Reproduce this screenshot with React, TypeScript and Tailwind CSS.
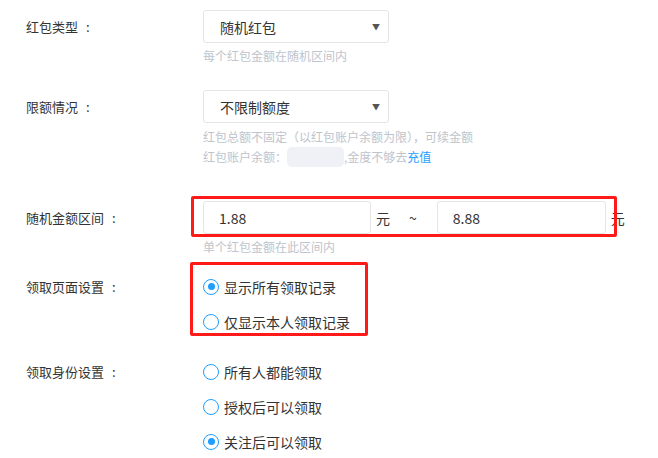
import React from "react";

const font = { fontFamily: '"Noto Sans CJK SC", "Liberation Sans", sans-serif' };

function Radio({ checked, label }: { checked?: boolean; label: string }) {
  return (
    <div className="flex h-[35px] items-center">
      <span className="flex h-[16px] w-[16px] items-center justify-center rounded-full border-[1.5px] border-[#1e9fff] bg-white">
        {checked && <span className="h-[7px] w-[7px] rounded-full bg-[#1e9fff]" />}
      </span>
      <span className="ml-[5px] text-[14px] leading-[20px] text-[#333]">{label}</span>
    </div>
  );
}

function Select({ value }: { value: string }) {
  return (
    <div className="flex h-[33px] w-[186px] items-center justify-between rounded-[3px] border border-[#e6e6e6] bg-white pl-[16px] pr-[8px]">
      <span className="text-[14px] leading-[20px] text-[#333]">{value}</span>
      <span className="text-[8px] leading-none text-[#555]">▼</span>
    </div>
  );
}

function Label({ text, className = "" }: { text: string; className?: string }) {
  return (
    <div className={`flex w-[203px] shrink-0 pl-[26px] text-[13px] text-[#333] ${className}`}>
      <span>{text}</span>
      <span className="inline-block pl-[8px]">:</span>
    </div>
  );
}

export default function App() {
  return (
    <div className="h-[458px] w-[658px] overflow-hidden bg-white pt-[10px]" style={font}>
      {/* Row 1 */}
      <div className="flex items-start">
        <Label text="红包类型" className="leading-[33px]" />
        <div>
          <Select value="随机红包" />
          <div className="mt-[5px] text-[12px] leading-[16px] text-[#c0c4cc]">每个红包金额在随机区间内</div>
        </div>
      </div>

      {/* Row 2 */}
      <div className="mt-[26px] flex items-start">
        <Label text="限额情况" className="leading-[33px]" />
        <div>
          <Select value="不限制额度" />
          <div className="mt-[4px] h-[20px] whitespace-nowrap text-[12px] leading-[20px] text-[#c0c4cc]">
            红包总额不固定（以红包账户余额为限），可续金额
          </div>
          <div className="flex h-[20px] items-center whitespace-nowrap text-[12px] leading-[20px] text-[#c0c4cc]">
            <span>红包账户余额：</span>
            <span className="inline-block h-[20px] w-[57px] rounded-[5px] bg-[#f0f1f6]" />
            <span>,金度不够去</span>
            <span className="text-[#1e9fff]">充值</span>
          </div>
        </div>
      </div>

      {/* Row 3 */}
      <div className="mt-[34px] flex items-start">
        <Label text="随机金额区间" className="leading-[33px]" />
        <div>
          <div className="relative flex h-[33px] items-center">
            <div className="flex h-[33px] w-[168px] items-center rounded-[3px] border border-[#e6e6e6] pl-[15px] text-[14px] leading-[20px] text-[#333]">
              1.88
            </div>
            <span className="ml-[5px] text-[14px] leading-[20px] text-[#333]">元</span>
            <span className="ml-[19px] text-[14px] leading-[20px] text-[#333]">~</span>
            <div className="ml-[20px] flex h-[33px] w-[169px] items-center rounded-[3px] border border-[#e6e6e6] pl-[15px] text-[14px] leading-[20px] text-[#333]">
              8.88
            </div>
            <span className="ml-[5px] text-[14px] leading-[20px] text-[#333]">元</span>
            <div className="pointer-events-none absolute left-[-12px] top-[-5px] h-[41px] w-[426px] rounded-[2px] border-[3px] border-[#ff1a1a]" />
          </div>
          <div className="mt-[5px] text-[12px] leading-[16px] text-[#c0c4cc]">单个红包金额在此区间内</div>
        </div>
      </div>

      {/* Row 4 */}
      <div className="mt-[14px] flex items-start">
        <Label text="领取页面设置" className="leading-[35px]" />
        <div className="relative">
          <Radio checked label="显示所有领取记录" />
          <Radio label="仅显示本人领取记录" />
          <div className="pointer-events-none absolute left-[-13px] top-[-7px] h-[74px] w-[178px] rounded-[2px] border-[3px] border-[#ff1a1a]" />
        </div>
      </div>

      {/* Row 5 */}
      <div className="mt-[15px] flex items-start">
        <Label text="领取身份设置" className="leading-[35px]" />
        <div>
          <Radio label="所有人都能领取" />
          <Radio label="授权后可以领取" />
          <Radio checked label="关注后可以领取" />
        </div>
      </div>
    </div>
  );
}
